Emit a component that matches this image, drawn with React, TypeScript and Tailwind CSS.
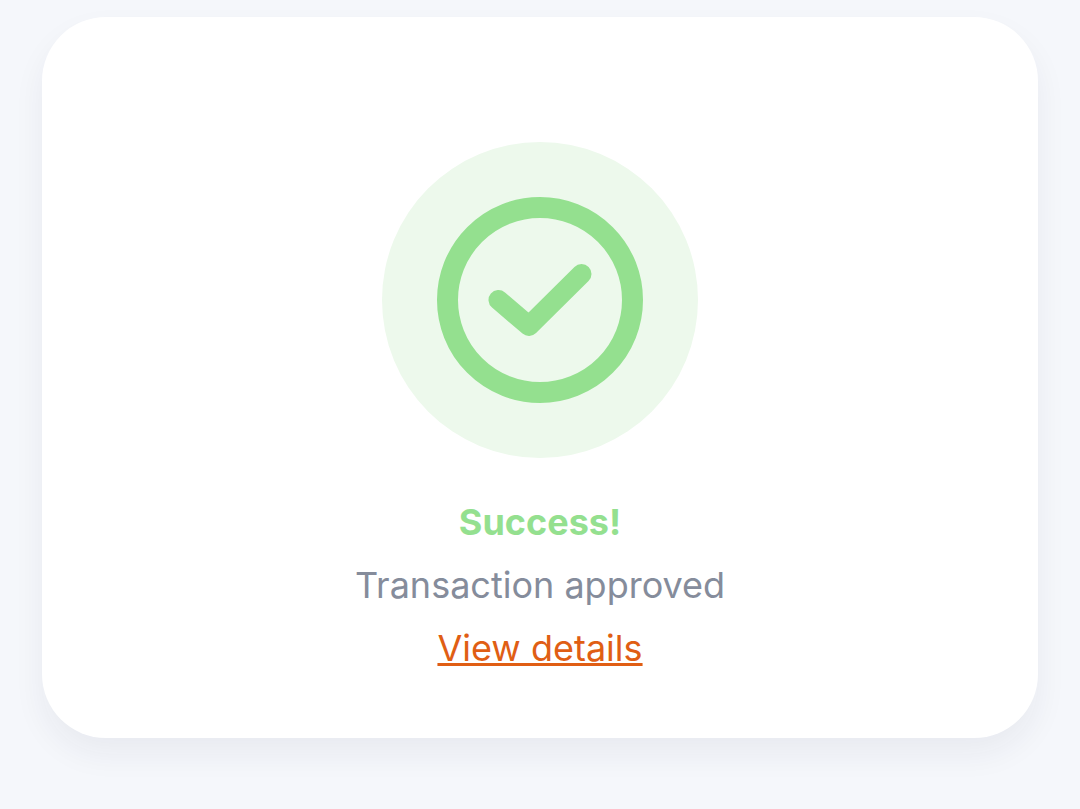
export default function App() {
  return (
    <main className="min-h-screen bg-[#f5f7fb] px-[42px] pt-[17px] pb-[71px] font-['Inter','Liberation_Sans',sans-serif]">
      <section className="flex flex-col items-center rounded-[64px] bg-white pt-[125px] pb-[58px] text-center shadow-[0_16px_32px_rgba(30,40,60,0.06)]">
        <div className="flex size-[316px] items-center justify-center rounded-full bg-[#edf9ec]">
          <svg viewBox="0 0 206 206" fill="none" className="size-[206px]" aria-hidden="true">
            <circle cx="103" cy="103" r="92.5" stroke="#94e08f" strokeWidth="21" />
            <path d="M61.5 103 L92 129 L144.5 77" stroke="#94e08f" strokeWidth="20" strokeLinecap="round" strokeLinejoin="round" />
          </svg>
        </div>

        <h1 className="mt-[33px] text-[36px] leading-[63px] font-bold text-[#94e08f]">Success!</h1>
        <p className="text-[36px] leading-[63px] text-[#858c9b]">Transaction approved</p>
        <a href="#details" className="text-[36px] leading-[63px] text-[#e05e14] underline decoration-[3px] underline-offset-2">
          View details
        </a>
      </section>
    </main>
  );
}
